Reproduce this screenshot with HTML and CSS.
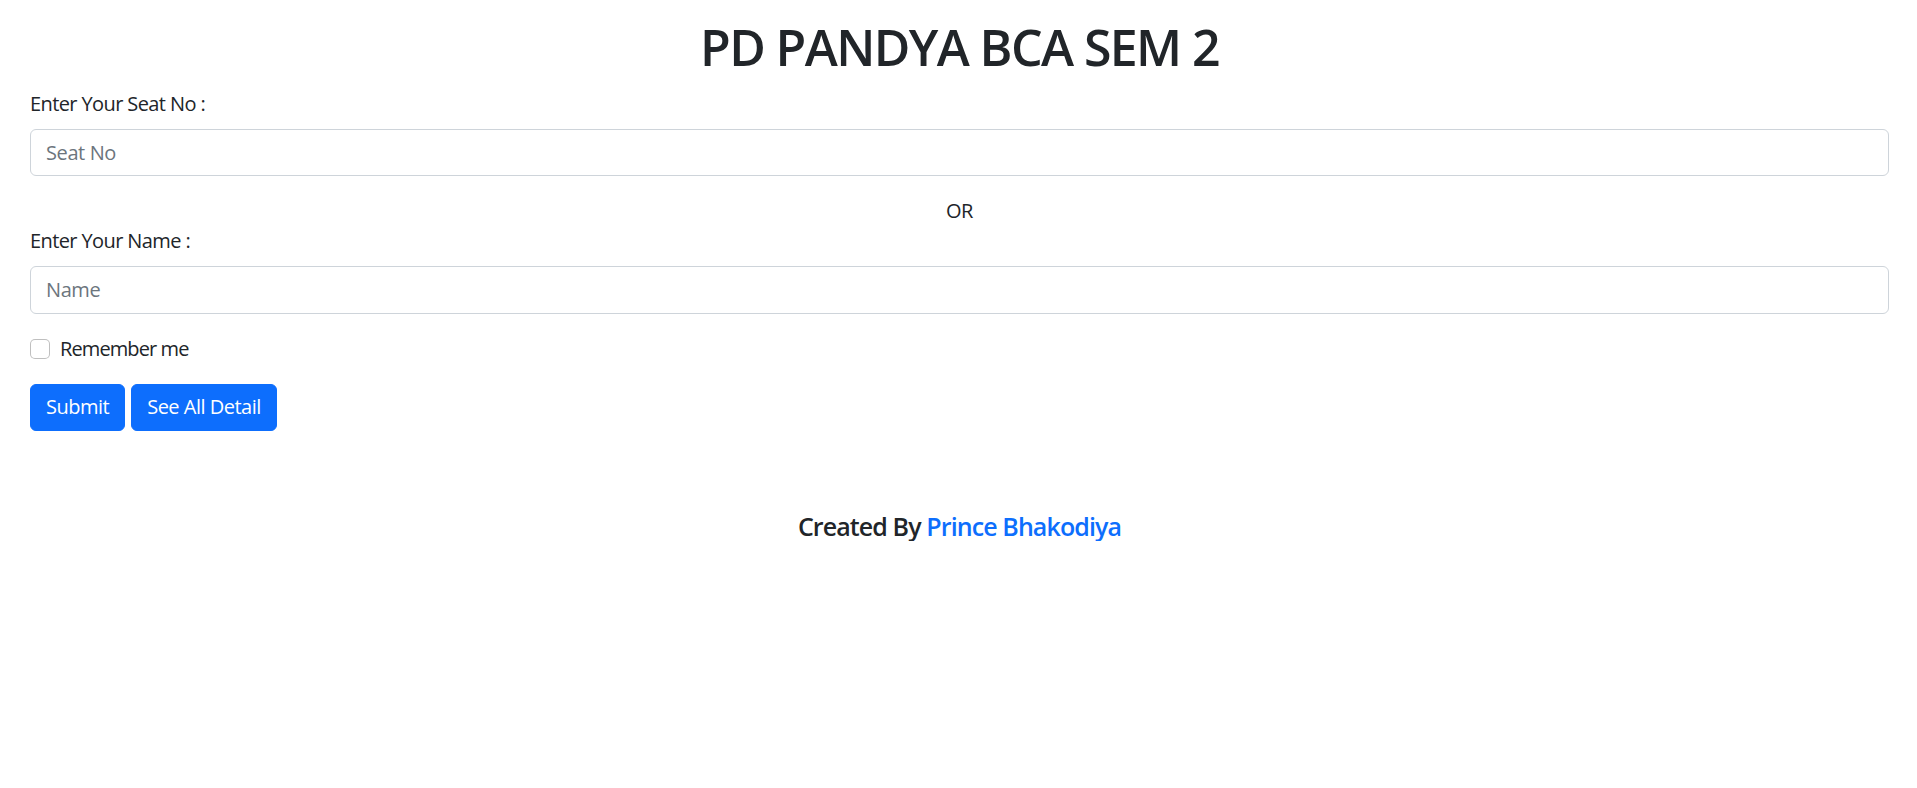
FILE: index.html
```html
<!DOCTYPE html>
<html lang="en">
<head>
<meta charset="utf-8">
<title>PD PANDYA BCA SEM 2</title>
<link rel="stylesheet" href="styles.css">
</head>
<body>
<div class="page">
  <h1 class="title">PD PANDYA BCA SEM 2</h1>
  <form class="form">
    <label class="label" for="seat">Enter Your Seat No :</label>
    <input class="control" id="seat" type="text" placeholder="Seat No">
    <div class="or">OR</div>
    <label class="label" for="name">Enter Your Name :</label>
    <input class="control" id="name" type="text" placeholder="Name">
    <div class="check">
      <input class="check-input" id="remember" type="checkbox">
      <label class="check-label" for="remember">Remember me</label>
    </div>
    <div class="actions">
      <button class="btn" type="submit">Submit</button>
      <button class="btn" type="button">See All Detail</button>
    </div>
  </form>
  <h5 class="credit">Created By <a class="credit-link" href="#">Prince Bhakodiya</a></h5>
</div>
</body>
</html>
```
FILE: styles.css
```css
* { box-sizing: border-box; }
html, body { margin: 0; padding: 0; background: #fff; }
body {
  font-family: "Open Sans", "Noto Sans", sans-serif;
  font-size: 20px;
  line-height: 1.5;
  color: #212529;
}
.page {
  padding: 0 28px 0 30px;
}
.title {
  margin: 0;
  padding-top: 17px;
  font-size: 50px;
  font-weight: 600;
  line-height: 1.2;
  text-align: center;
  letter-spacing: -1.6px;
}
.form {
  display: flex;
  flex-direction: column;
  margin-top: 11.5px;
}
.label {
  display: block;
  margin-bottom: 10px;
  letter-spacing: -0.6px;
}
.control {
  display: block;
  width: 100%;
  height: 47.5px;
  padding: 7px 15px;
  font-family: inherit;
  font-size: 20px;
  line-height: 1.5;
  color: #212529;
  background: #fff;
  border: 1px solid #ced4da;
  border-radius: 6px;
  outline: none;
  letter-spacing: -0.4px;
}
.control::placeholder { color: #6c757d; opacity: 1; }
.or {
  margin-top: 20px;
  text-align: center;
  letter-spacing: -0.4px;
}
.check {
  display: flex;
  align-items: flex-start;
  margin-top: 20px;
  min-height: 30px;
}
.check-input {
  appearance: none;
  -webkit-appearance: none;
  width: 20px;
  height: 20px;
  margin: 5px 10px 0 0;
  border: 1px solid rgba(0,0,0,.25);
  border-radius: 5px;
  background: #fff;
  flex: none;
}
.check-label { letter-spacing: -0.9px; }
.actions {
  display: flex;
  gap: 6px;
  margin-top: 20px;
}
.btn {
  height: 47.5px;
  padding: 7px 15px;
  font-family: inherit;
  font-size: 20px;
  line-height: 1.5;
  color: #fff;
  background: #0d6efd;
  border: 1px solid #0d6efd;
  border-radius: 6px;
  letter-spacing: -0.5px;
  cursor: pointer;
}
.credit {
  margin: 80px 0 0;
  font-size: 25px;
  font-weight: 600;
  line-height: 1.2;
  text-align: center;
  letter-spacing: -0.9px;
}
.credit-link { color: #0d6efd; text-decoration: none; }
```
